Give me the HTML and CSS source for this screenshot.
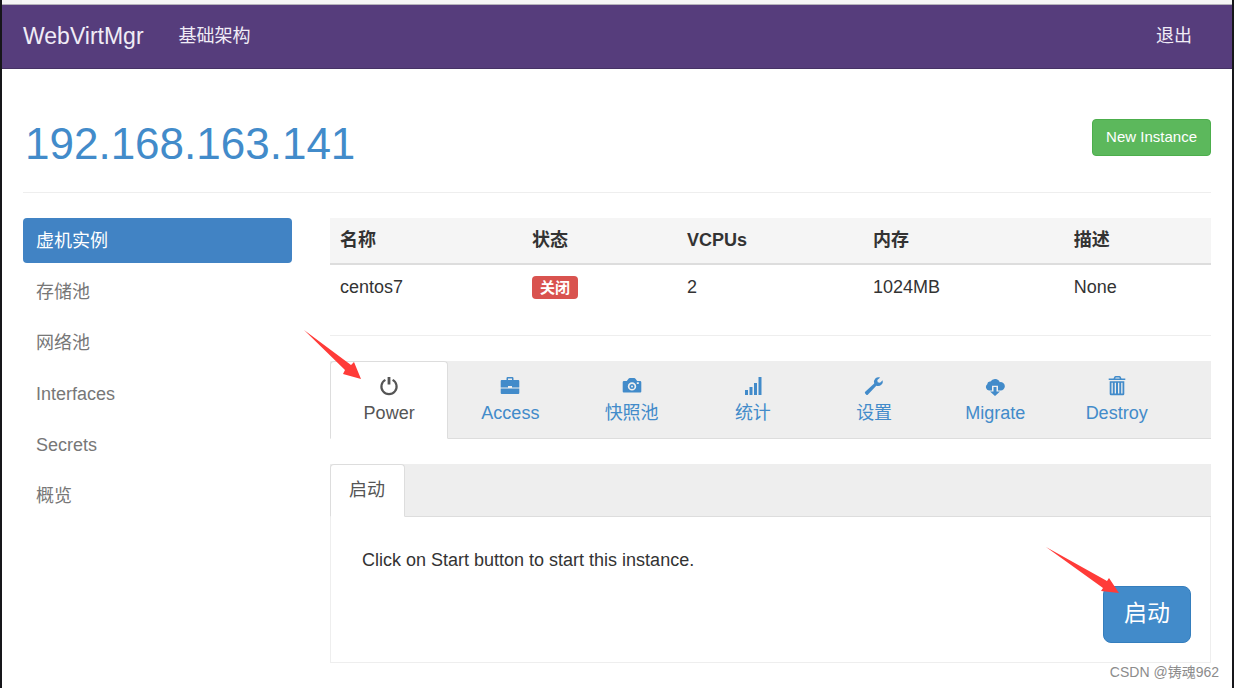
FILE: index.html
```
<!DOCTYPE html>
<html lang="zh-CN">
<head>
<meta charset="utf-8">
<title>WebVirtMgr</title>
<link rel="stylesheet" href="styles.css">
</head>
<body>
<header class="navbar">
  <a class="brand" href="#">WebVirtMgr</a>
  <nav class="navbar-links">
    <a href="#">基础架构</a>
    <a class="logout" href="#">退出</a>
  </nav>
</header>
<div class="container">
  <div class="page-header">
    <h1><a href="#">192.168.163.141</a></h1>
    <button class="btn btn-success" type="button">New Instance</button>
  </div>
  <div class="layout">
    <nav class="sidebar">
      <a class="active" href="#">虚机实例</a>
      <a href="#">存储池</a>
      <a href="#">网络池</a>
      <a href="#">Interfaces</a>
      <a href="#">Secrets</a>
      <a href="#">概览</a>
    </nav>
    <main class="content">
      <table class="instances">
        <thead>
          <tr><th class="c-name">名称</th><th class="c-state">状态</th><th class="c-cpu">VCPUs</th><th class="c-mem">内存</th><th>描述</th></tr>
        </thead>
        <tbody>
          <tr><td>centos7</td><td><span class="label">关闭</span></td><td>2</td><td>1024MB</td><td>None</td></tr>
        </tbody>
      </table>
      <div class="tabbar">
        <div class="tabs">
          <a class="tab active" href="#">
            <svg class="icon" viewBox="0 0 20 20"><path d="M6.4 3.9A7.6 7.6 0 1 0 13.6 3.9" fill="none" stroke="currentColor" stroke-width="2.2"/><path d="M8.600 1h2.800v7.500H8.600z"/></svg>
            <span>Power</span>
            <svg class="arrow arrow-tab" viewBox="0 0 57 49"><path d="M0 0 47 35 50 32 57 49 39 44 41 40z"/></svg>
          </a>
          <a class="tab" href="#">
            <svg class="icon" viewBox="0 0 20 20"><path fill-rule="evenodd" d="M6.5 4V2.2q0-1.200 1.200-1.200h4.600q1.200 0 1.200 1.200V4h4.800q1 0 1 1v6.500H12V10H8v1.500H.7V5q0-1 1-1zM8 4h4V2.500H8zM.7 12.600h18.600V17q0 1-1 1H1.700q-1 0-1-1z"/></svg>
            <span>Access</span>
          </a>
          <a class="tab" href="#">
            <svg class="icon" viewBox="0 0 20 20"><path fill-rule="evenodd" d="M2 5h2.800L6.500 2.700Q7 2 7.800 2h4.400q.8 0 1.300.7L15.200 5H18q1.300 0 1.300 1.300v9.200q0 1-1 1H1.700q-1 0-1-1V6.300Q.7 5 2 5zM10 6.200a4.200 4.200 0 1 0 0 8.400 4.200 4.200 0 0 0 0-8.400zM14.800 6.300h2v1.800h-2z"/><circle cx="10" cy="10.400" r="2.500"/><circle cx="10" cy="10.400" r="1" class="lens"/></svg>
            <span>快照池</span>
          </a>
          <a class="tab" href="#">
            <svg class="icon" viewBox="0 0 20 20"><path d="M2 14h3v5H2zM6.500 11h3v8h-3zM11 7h3v12h-3zM15.500 1h3v18h-3z"/></svg>
            <span>统计</span>
          </a>
          <a class="tab" href="#">
            <svg class="icon" viewBox="0 0 20 20"><path d="M16.200 1.500Q13.500.5 11.300 2.600 9.300 4.700 10.200 7.600L1.200 15.800Q.4 16.700 1.200 17.600L2.300 18.700Q3.200 19.400 4 18.500L12.300 9.700Q15.300 10.700 17.600 8.500 19.300 6.700 18.700 4.200L16 6.700 13.700 6.200 13.300 4z"/></svg>
            <span>设置</span>
          </a>
          <a class="tab" href="#">
            <svg class="icon" viewBox="0 0 20 20"><path d="M4 14.500A3.600 3.600 0 0 1 2.200 8.200 2.900 2.900 0 0 1 5.500 5.600 5.200 5.200 0 0 1 14.800 6.200 4.200 4.200 0 1 1 15.300 14.500H13V9.800H7v4.700z"/><path d="M8.500 11h3v4.500h3.500L10 20 5 15.500h3.500z"/></svg>
            <span>Migrate</span>
          </a>
          <a class="tab" href="#">
            <svg class="icon" viewBox="0 0 20 20"><path fill-rule="evenodd" d="M1.700 4V2.600H6.500L7.500.5Q7.800 0 8.500 0h4Q13.200 0 13.500.5l1 2.100h3.800V4zM8.200 2.600h4.600l-.5-1.200H8.700z"/><path fill-rule="evenodd" d="M2.700 5.200h14.600V18q0 1.300-1.300 1.300H4Q2.700 19.300 2.700 18zM4.500 6.800V17.500h1.300V6.800zM7.700 6.800V17.500H9V6.800zM11 6.800V17.500h1.300V6.800zM14.200 6.800V17.500h1.300V6.800z"/></svg>
            <span>Destroy</span>
          </a>
        </div>
      </div>
      <div class="subtabs">
        <a class="subtab" href="#">启动</a>
      </div>
      <section class="pane">
        <p>Click on Start button to start this instance.</p>
        <div class="actions">
          <button class="btn btn-primary" type="button">启动</button>
          <svg class="arrow arrow-start" viewBox="0 0 73 46"><path d="M0 0 61 34 63 31 73 46 55 44 57 41z"/></svg>
        </div>
      </section>
    </main>
  </div>
</div>
<footer class="credit">CSDN @铸魂962</footer>
</body>
</html>
```
FILE: styles.css
```
* { box-sizing: border-box; }

body {
  margin: 0;
  min-height: 100vh;
  background: #fff;
  color: #333;
  border: solid #16161a;
  border-width: 0 2px;
  font: 18px/26px "Liberation Sans", Arial, "Noto Sans CJK SC", sans-serif;
}

a { color: #428bca; text-decoration: none; }

.navbar {
  display: flex;
  align-items: center;
  height: 69px;
  padding: 0 40px 0 21px;
  background: #563d7c;
  border-top: 4px solid #f5f5f5;
  border-bottom: 1px solid #463265;
  box-shadow: inset 0 1px #b5b2ba;
}
.navbar a { color: #f0ecf6; }
.brand { font-size: 23px; margin-right: 35px; }
.navbar-links { display: flex; flex: 1; }
.logout { margin-left: auto; }

.container { padding: 0 21px; }

.page-header {
  display: flex;
  justify-content: space-between;
  align-items: flex-start;
  padding: 50px 0 23px;
  border-bottom: 1px solid #eee;
}
.page-header h1 {
  margin: 0;
  padding-left: 2px;
  font-size: 44px;
  font-weight: normal;
  line-height: 50px;
}

.btn {
  color: #fff;
  font-family: inherit;
  border: 1px solid;
}
.btn-success {
  padding: 7px 13px 8px;
  font-size: 15px;
  line-height: 20px;
  background: #5cb85c;
  border-color: #4cae4c;
  border-radius: 4px;
}
.btn-primary {
  padding: 10px 20px 13px;
  font-size: 23px;
  line-height: 32px;
  background: #428bca;
  border-color: #357ebd;
  border-radius: 8px;
}

.layout {
  display: grid;
  grid-template-columns: 269fr 881fr;
  gap: 38px;
  padding-top: 25px;
}

.sidebar {
  display: flex;
  flex-direction: column;
  gap: 6px;
}
.sidebar a {
  padding: 10px 13px;
  color: #777;
  border-radius: 4px;
}
.sidebar a.active {
  padding-bottom: 9px;
  color: #fff;
  background: #4183c4;
}
.sidebar a:not(.active) { padding-bottom: 9px; }

.instances {
  width: 100%;
  table-layout: fixed;
  border-collapse: collapse;
  text-align: left;
}
.instances th {
  padding: 9px 10px 10px;
  background: #f5f5f5;
  border-bottom: 2px solid #ddd;
}
.instances td { padding: 9px 10px 10px; }
.c-name { width: 21.8%; }
.c-state { width: 17.6%; }
.c-cpu { width: 21.1%; }
.c-mem { width: 22.8%; }
.label {
  display: inline-block;
  padding: 0 8px;
  color: #fff;
  background: #d9534f;
  border-radius: 4px;
  font-size: 15px;
  font-weight: bold;
  line-height: 23px;
}

.tabbar {
  margin-top: 25px;
  background: linear-gradient(#eee, #eee) content-box;
  border-top: 1px solid #eee;
  padding-top: 25px;
}
.tabs {
  display: grid;
  grid-template-columns: repeat(7, 1fr);
  gap: 3px;
  padding-right: 4%;
  border-bottom: 1px solid #ddd;
}
.tab {
  position: relative;
  display: flex;
  flex-direction: column;
  align-items: center;
  margin-bottom: -1px;
  padding: 14px 0 12px;
  border: 1px solid transparent;
  border-radius: 4px 4px 0 0;
}
.tab span { margin-top: 4px; }
.tab.active, .subtab {
  color: #555;
  background: #fff;
  border: 1px solid #ddd;
  border-bottom-color: #fff;
}
.icon { width: 20px; height: 20px; fill: currentColor; }
.lens { fill: #eee; }

.subtabs {
  display: flex;
  margin-top: 25px;
  background: #eee;
  border-bottom: 1px solid #ddd;
}
.subtab {
  margin-bottom: -1px;
  padding: 12px 19px 13px 18px;
  border-radius: 4px 4px 0 0;
}

.pane {
  padding: 30px 19px 19px 31px;
  border: 1px solid #eee;
  border-top: 0;
}
.pane p { margin: 0 0 13px; }
.actions {
  position: relative;
  width: fit-content;
  margin-left: auto;
}
.actions .btn { display: block; }

.arrow {
  position: absolute;
  fill: #ff3b38;
  pointer-events: none;
}
.arrow-tab { left: -27px; top: -32px; width: 57px; height: 49px; }
.arrow-start { left: -57px; top: -39px; width: 73px; height: 46px; }

.credit {
  padding-right: 13px;
  color: #8c8c8c;
  font-size: 14px;
  line-height: 18px;
  text-align: right;
}
```
